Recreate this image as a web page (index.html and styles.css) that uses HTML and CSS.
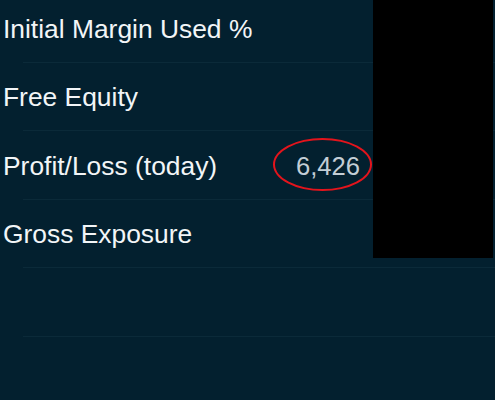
FILE: index.html
```html
<!DOCTYPE html>
<html>
<head>
<meta charset="utf-8">
<link rel="stylesheet" href="styles.css">
</head>
<body>
<div class="screen">
  <ul class="list">
    <li class="row"><span class="label">Initial Margin Used %</span></li>
    <li class="row"><span class="label">Free Equity</span></li>
    <li class="row"><span class="label">Profit/Loss (today)</span><span class="value">6,426</span></li>
    <li class="row"><span class="label">Gross Exposure</span></li>
    <li class="row"></li>
  </ul>
  <div class="redact"></div>
</div>
</body>
</html>
```
FILE: styles.css
```css
html, body {
  margin: 0;
  padding: 0;
  background: #03202f;
}
.screen {
  position: relative;
  width: 495px;
  height: 400px;
  overflow: hidden;
  font-family: "Liberation Sans", Arial, sans-serif;
}
.list {
  list-style: none;
  margin: -5.4px 0 0 0;
  padding: 0;
}
.row {
  display: flex;
  align-items: center;
  justify-content: space-between;
  height: 65.4px;
  padding-top: 2px;
  margin-left: 23px;
  padding-right: 135px;
  border-bottom: 1px solid #0b2a39;
}
.label {
  margin-left: -20px;
  color: #f2f5f7;
  font-size: 26.4px;
}
.value {
  position: relative;
  color: #c3ced6;
  font-size: 25.6px;
}
.value::before {
  content: "";
  position: absolute;
  left: -23px;
  top: -14px;
  width: 95px;
  height: 49px;
  border: 2px solid #e3141c;
  border-radius: 50%;
}
.redact {
  position: absolute;
  left: 373px;
  top: 0;
  width: 120px;
  height: 258px;
  background: #000;
}
```
